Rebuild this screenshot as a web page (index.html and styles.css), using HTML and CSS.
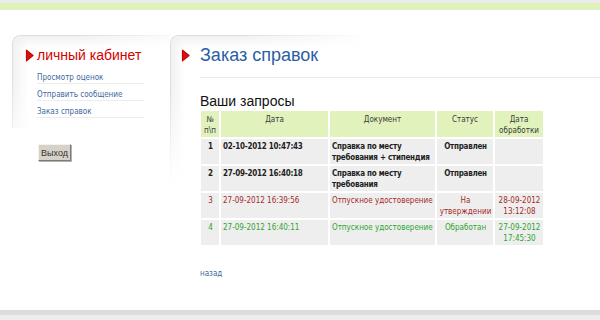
FILE: index.html
```html
<!DOCTYPE html>
<html lang="ru">
<head>
    <meta charset="UTF-8">
    <title>Заказ справок</title>
    <link rel="stylesheet" href="styles.css">
</head>
<body>
    <div class="topbar"></div>
    <div class="page">
        <aside class="sidebar">
            <div class="panel">
                <h2 class="panel-title">
                    <svg class="arrow" width="9" height="13" viewBox="0 0 9 13"><path d="M1.5 1.2 L8 6.5 L1.5 11.8 Z" fill="#d41414" stroke="#c00" stroke-width="1.2" stroke-linejoin="round"/></svg>
                    <span>личный кабинет</span>
                </h2>
                <ul class="menu">
                    <li><a href="#">Просмотр оценок</a></li>
                    <li><a href="#">Отправить сообщение</a></li>
                    <li><a href="#">Заказ справок</a></li>
                </ul>
            </div>
            <button class="logout">Выход</button>
        </aside>

        <main class="content">
            <div class="content-card">
                <h1 class="content-title">
                    <svg class="arrow" width="9" height="13" viewBox="0 0 9 13"><path d="M1.5 1.2 L8 6.5 L1.5 11.8 Z" fill="#d41414" stroke="#c00" stroke-width="1.2" stroke-linejoin="round"/></svg>
                    <span>Заказ справок</span>
                </h1>
                <h3 class="section-title">Ваши запросы</h3>
                <table class="requests">
                    <colgroup>
                        <col class="c-num">
                        <col class="c-date">
                        <col class="c-doc">
                        <col class="c-status">
                        <col class="c-done">
                    </colgroup>
                    <thead>
                        <tr>
                            <th>№<br>п\п</th>
                            <th>Дата</th>
                            <th>Документ</th>
                            <th>Статус</th>
                            <th>Дата обработки</th>
                        </tr>
                    </thead>
                    <tbody>
                        <tr class="sent">
                            <td class="center">1</td>
                            <td>02-10-2012 10:47:43</td>
                            <td>Справка по месту требования + стипендия</td>
                            <td class="center">Отправлен</td>
                            <td class="center"></td>
                        </tr>
                        <tr class="sent">
                            <td class="center">2</td>
                            <td>27-09-2012 16:40:18</td>
                            <td>Справка по месту требования</td>
                            <td class="center">Отправлен</td>
                            <td class="center"></td>
                        </tr>
                        <tr class="pending">
                            <td class="center">3</td>
                            <td>27-09-2012 16:39:56</td>
                            <td>Отпускное удостоверение</td>
                            <td class="center">На утверждении</td>
                            <td class="center">28-09-2012 13:12:08</td>
                        </tr>
                        <tr class="done">
                            <td class="center">4</td>
                            <td>27-09-2012 16:40:11</td>
                            <td>Отпускное удостоверение</td>
                            <td class="center">Обработан</td>
                            <td class="center">27-09-2012 17:45:30</td>
                        </tr>
                    </tbody>
                </table>
                <a class="back" href="#">назад</a>
            </div>
        </main>
    </div>
    <div class="footer"></div>
</body>
</html>
```

FILE: styles.css
```css
html, body {
    margin: 0;
    padding: 0;
    background: #fff;
    font-family: "Liberation Sans", Arial, sans-serif;
    color: #222;
}

.topbar {
    height: 7px;
    border-top: 3px solid #ececec;
    background: #dff2bb;
}

.page {
    display: flex;
    height: 300px;
    overflow: hidden;
}

/* левая колонка */
.sidebar {
    width: 158px;
    flex: none;
    padding: 25px 0 0 12px;
}

.panel {
    position: relative;
    padding: 10px 0 10px 13px;
}

.panel::before,
.content-card::before {
    content: '';
    position: absolute;
    inset: 0;
    border-top: 1px solid #dedede;
    border-left: 1px solid #dedede;
    border-radius: 8px 0 0 0;
    background:
        linear-gradient(to right, #f1f1f1, rgba(255,255,255,0) 15px),
        linear-gradient(to bottom, #f1f1f1, rgba(255,255,255,0) 12px);
    -webkit-mask-image: radial-gradient(190px 130px at 0 0, #000 35%, transparent 100%);
    mask-image: radial-gradient(190px 130px at 0 0, #000 35%, transparent 100%);
    pointer-events: none;
}

.panel-title {
    position: relative;
    display: flex;
    align-items: center;
    gap: 3px;
    margin: 0 0 2px;
    height: 20px;
    font-size: 14px;
    font-weight: normal;
    color: #d40000;
}

.arrow {
    display: block;
    flex: none;
}

.menu {
    position: relative;
    list-style: none;
    margin: 0 0 0 12px;
    padding: 0;
    width: 107px;
}

.menu li {
    height: 16px;
    line-height: 16px;
    border-bottom: 1px solid #ececec;
}

.menu a,
.back {
    font-family: "DejaVu Sans Condensed", "DejaVu Sans", sans-serif;
    font-size: 8px;
    color: #41699e;
    text-decoration: none;
}

.logout {
    display: block;
    margin: 16px 0 0 26px;
    width: 33px;
    height: 17px;
    padding: 0;
    font-family: "Liberation Sans", Arial, sans-serif;
    font-size: 9px;
    color: #333;
    background: #d6d2ca;
    border: 1px solid;
    border-color: #f4f2ee #7e7b76 #7e7b76 #f4f2ee;
    box-shadow: 1px 1px 0 #b5b2ab;
}

/* основная часть */
.content {
    flex: 1;
    padding-top: 25px;
}

.content-card {
    position: relative;
    height: 100%;
    padding: 8px 0 0 30px;
}

.content-card::before {
    -webkit-mask-image: radial-gradient(200px 150px at 0 0, #000 35%, transparent 100%);
    mask-image: radial-gradient(200px 150px at 0 0, #000 35%, transparent 100%);
}

.content-title {
    position: relative;
    display: flex;
    align-items: center;
    gap: 10px;
    margin: 0 0 0 -19px;
    padding: 0 0 11px 19px;
    height: 24px;
    font-size: 18px;
    font-weight: normal;
    color: #2b5ea6;
    background: linear-gradient(#e9e9e9, #e9e9e9) no-repeat left 19px bottom / 100% 1px;
}

.content-title .arrow {
    margin-left: -19px;
}

.section-title {
    position: relative;
    margin: 15px 0 0;
    line-height: 16px;
    font-size: 14px;
    font-weight: normal;
    color: #111;
}

.requests {
    position: relative;
    margin-left: -1px;
    width: 346px;
    table-layout: fixed;
    border-collapse: separate;
    border-spacing: 2px;
    font-family: "DejaVu Sans Condensed", "DejaVu Sans", sans-serif;
    font-size: 8px;
    line-height: 11px;
}

.c-num { width: 18px; }
.c-date { width: 107px; }
.c-doc { width: 105px; }
.c-status { width: 56px; }
.c-done { width: 48px; }

.requests th {
    height: 20px;
    padding: 3px 1px 1px;
    vertical-align: top;
    background: #e1f2bd;
    font-weight: normal;
    color: #3a3a3a;
}

.requests td {
    height: 22px;
    padding: 2px 1px 1px 2px;
    vertical-align: top;
    background: #eeeeee;
}

.requests .center {
    text-align: center;
}

.sent td {
    font-weight: bold;
    color: #1e1e1e;
    letter-spacing: -0.25px;
}

.pending td {
    color: #a52a2a;
}

.done td {
    color: #2ea52e;
}

.back {
    position: relative;
    display: inline-block;
    margin-top: 22px;
}

.footer {
    height: 5px;
    border-top: 5px solid #dcdcdc;
    background: #ededed;
}
```
